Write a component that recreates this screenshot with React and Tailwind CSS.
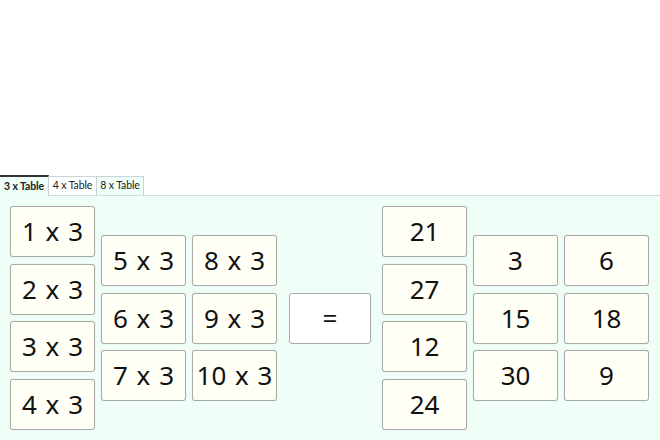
import React from 'react';

const Card = ({ children }) => (
  <div className="w-[85px] h-[51px] flex items-center justify-center rounded-[3px] border border-[#a9aaa6] bg-[#fffff6] text-[26px] text-[#111] [word-spacing:2px] shadow-[0_0_1px_rgba(0,0,0,0.2)]">
    {children}
  </div>
);

const Column = ({ items }) => (
  <div className="flex flex-col gap-[6.5px]">
    {items.map((t) => (
      <Card key={t}>{t}</Card>
    ))}
  </div>
);

const App = () => {
  return (
    <div className="w-[660px] h-[440px] bg-white overflow-hidden flex flex-col" style={{ fontFamily: '"Noto Sans", "DejaVu Sans", sans-serif' }}>
      <div className="h-[175px]" />

      {/* tabs */}
      <div className="flex h-[20px] items-end text-[10.5px] text-[#222] tracking-[-0.1px]" style={{ fontFamily: 'Lato, "Open Sans", sans-serif' }}>
        <div className="w-[49px] h-[21px] flex items-center justify-center font-bold bg-[#effff8] border-t-2 border-t-[#333] border-r border-r-[#ccd3d8] -mb-px relative z-10">
          3 x Table
        </div>
        <div className="w-[48px] h-[19px] flex items-center justify-center bg-white border-t border-r border-[#ccd3d8]">
          4 x Table
        </div>
        <div className="w-[47px] h-[19px] flex items-center justify-center bg-[#effff8] border-t border-r border-[#ccd3d8]">
          8 x Table
        </div>
      </div>

      {/* panel */}
      <div className="flex-1 bg-[#effff8] border-t border-[#d3dae0] pl-[10px] pt-[10px] flex items-start">
        <div className="flex items-center h-[224px]">
          <Column items={['1 x 3', '2 x 3', '3 x 3', '4 x 3']} />
          <div className="ml-[6px]">
            <Column items={['5 x 3', '6 x 3', '7 x 3']} />
          </div>
          <div className="ml-[6px]">
            <Column items={['8 x 3', '9 x 3', '10 x 3']} />
          </div>
          <div className="ml-[12px] w-[82px] h-[51px] flex items-center justify-center rounded-[3px] border border-[#a9aaa6] bg-white text-[26px] text-[#111]">
            =
          </div>
          <div className="ml-[11px]">
            <Column items={['21', '27', '12', '24']} />
          </div>
          <div className="ml-[6px]">
            <Column items={['3', '15', '30']} />
          </div>
          <div className="ml-[6px]">
            <Column items={['6', '18', '9']} />
          </div>
        </div>
      </div>
    </div>
  );
};

export default App;
